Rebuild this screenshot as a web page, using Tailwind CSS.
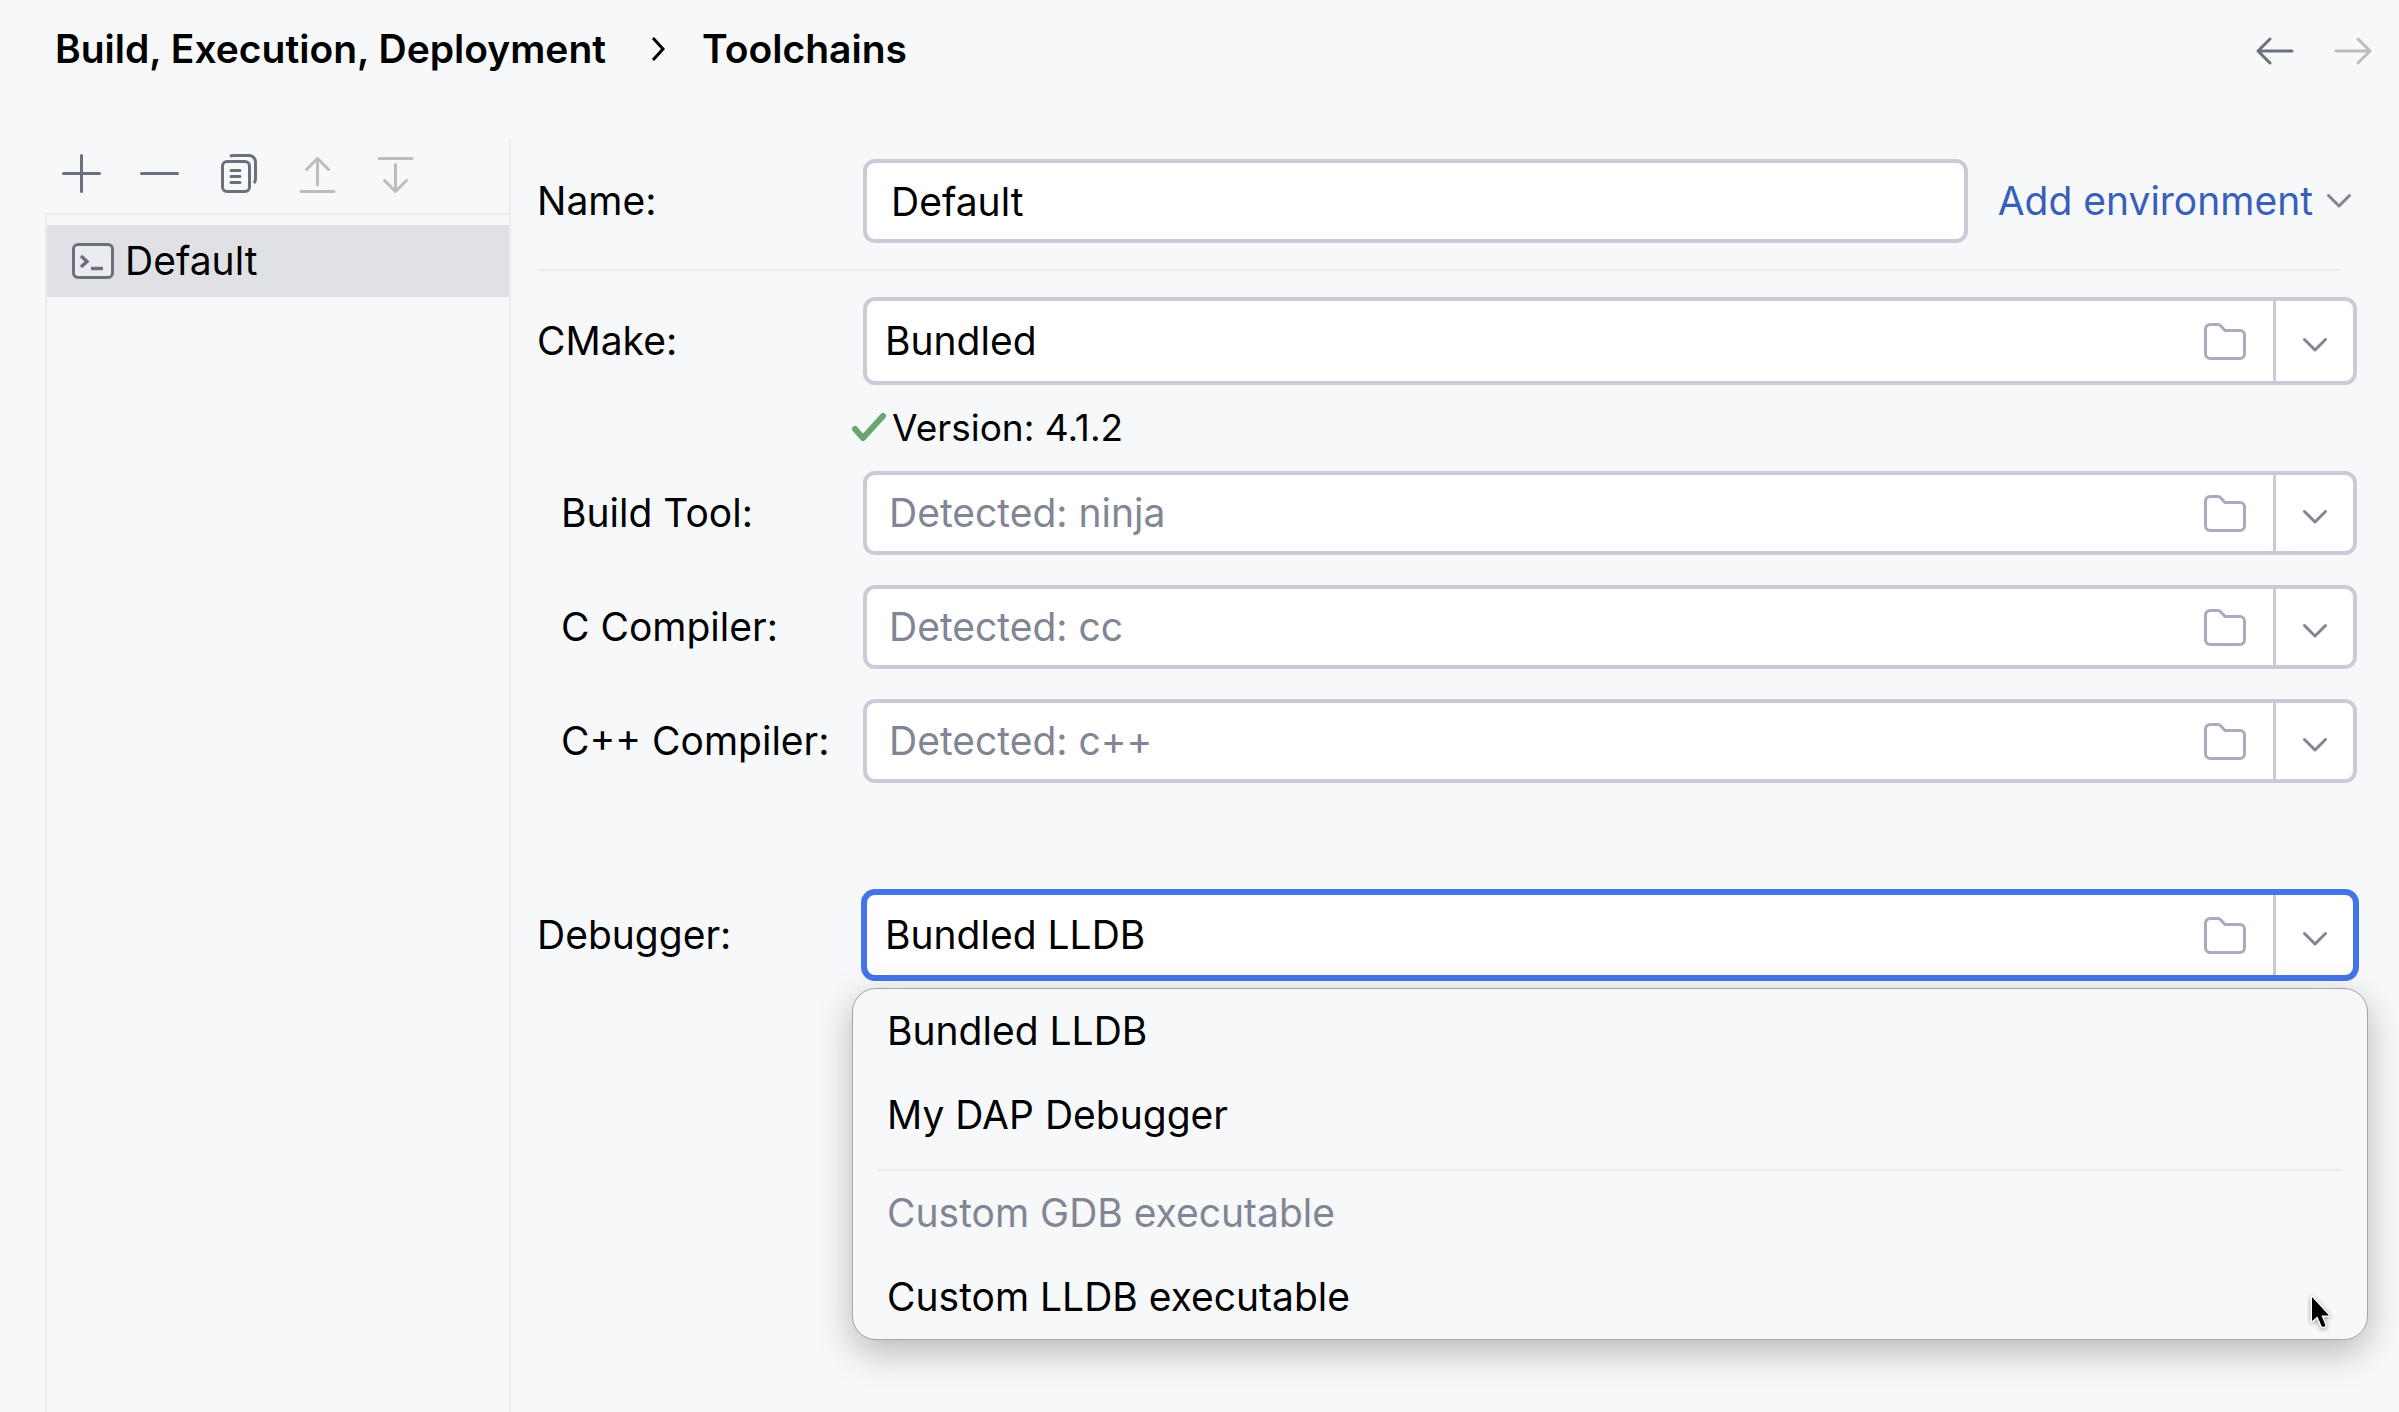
<!DOCTYPE html>
<html lang="en">
<head>
  <meta charset="UTF-8">
  <meta name="viewport" content="width=device-width, initial-scale=1.0">
  <title>Toolchains</title>
  <script src="https://cdn.jsdelivr.net/npm/@tailwindcss/browser@4"></script>
</head>
<body class="bg-[#f7f8fa] text-black font-['Inter',sans-serif] text-[39px] leading-[48px] min-h-screen flex flex-col">
  <!-- shared icons -->
  <svg class="hidden">
    <symbol id="folder" viewBox="0 0 48 48">
      <path d="M4.500 12a4.500 4.500 0 0 1 4.500-4.500h8.200a3 3 0 0 1 2.200 1l4.600 5h15a4.500 4.500 0 0 1 4.500 4.500v19a4.500 4.500 0 0 1-4.500 4.500H9a4.500 4.500 0 0 1-4.500-4.500z" fill="none" stroke="#a8adbd" stroke-width="3"/>
    </symbol>
    <symbol id="chevron" viewBox="0 0 24 24">
      <path d="M1.500 6.500 12 17 22.500 6.500" fill="none" stroke="#818594" stroke-width="3" stroke-linecap="round" stroke-linejoin="round"/>
    </symbol>
  </svg>

  <header class="h-[98px] mb-[41px] pl-[55px] pr-[22px] flex items-center justify-between shrink-0">
    <h1 class="flex items-center font-semibold">
      <span>Build, Execution, Deployment</span>
      <svg class="w-6 h-6 ml-10 mr-8" viewBox="0 0 24 24"><path d="M7 1l10 11L7 23" fill="none" stroke="#000" stroke-width="3"/></svg>
      <span>Toolchains</span>
    </h1>
    <nav class="flex gap-[30px]">
      <button aria-label="Back"><svg class="w-12 h-12" viewBox="0 0 48 48"><path d="M41 26H7M19 14 7 26l12 12" fill="none" stroke="#6c707e" stroke-width="3" stroke-linecap="round" stroke-linejoin="round"/></svg></button>
      <button aria-label="Forward" disabled><svg class="w-12 h-12" viewBox="0 0 48 48"><path d="M7 26h34M29 14l12 12-12 12" fill="none" stroke="#bdbdbd" stroke-width="3" stroke-linecap="round" stroke-linejoin="round"/></svg></button>
    </nav>
  </header>

  <div class="flex grow">
    <aside class="w-[511px] shrink-0 pl-[45px] border-r-2 border-[#ebecf0] flex flex-col">
      <div class="h-[74px] pt-[10px] pl-3 flex gap-[30px] items-start">
        <button aria-label="Add"><svg class="w-12 h-12" viewBox="0 0 48 48"><path d="M24.500 6.500v36M6.500 24.500h36" fill="none" stroke="#6c707e" stroke-width="3" stroke-linecap="round"/></svg></button>
        <button aria-label="Remove"><svg class="w-12 h-12" viewBox="0 0 48 48"><path d="M6.500 24.500h36" fill="none" stroke="#6c707e" stroke-width="3" stroke-linecap="round"/></svg></button>
        <button aria-label="Copy">
          <svg class="w-12 h-12" viewBox="0 0 48 48" fill="none" stroke="#6c707e" stroke-width="3">
            <rect x="9.500" y="12.500" width="27" height="30" rx="4.500"/>
            <path d="M18 21.500h9M18 27.500h9M18 33.500h9" stroke-linecap="round"/>
            <path d="M17 7.500a6 6 0 0 1 3-1h16a6.500 6.500 0 0 1 6.500 6.500v17a7 7 0 0 1-1.500 4"/>
          </svg>
        </button>
        <button aria-label="Move up" disabled><svg class="w-12 h-12" viewBox="0 0 48 48"><path d="M10 42.500h33M26.500 36V10M15.500 20.500l11-11 11 11" fill="none" stroke="#bdbdbd" stroke-width="3" stroke-linecap="round" stroke-linejoin="round"/></svg></button>
        <button aria-label="Move down" disabled><svg class="w-12 h-12" viewBox="0 0 48 48"><path d="M10 9.500h33M26.500 15.500v27M15.500 31.500l11 11 11-11" fill="none" stroke="#bdbdbd" stroke-width="3" stroke-linecap="round" stroke-linejoin="round"/></svg></button>
      </div>
      <ul class="grow border-t-2 border-l-2 border-[#ebecf0] pt-[10px]">
        <li class="h-[72px] bg-[#dfe1e5] pl-[22px] flex items-center gap-2">
          <svg class="w-12 h-12" viewBox="0 0 48 48">
            <rect x="4.500" y="7.500" width="39" height="33" rx="4.500" fill="#ebecf0" stroke="#6c707e" stroke-width="3"/>
            <path d="M12 19l6 5.500-6 5.500M22 31.500h12" fill="none" stroke="#6c707e" stroke-width="3.500"/>
          </svg>
          <span>Default</span>
        </li>
      </ul>
    </aside>

    <main class="grow pl-[26px] pr-[42px] pt-5">
      <div class="flex items-center">
        <label for="name" class="w-[326px] shrink-0">Name:</label>
        <input id="name" type="text" value="Default" class="grow min-w-0 h-[84px] border-4 border-[#c9ccd6] rounded-xl bg-white pl-6 outline-none">
        <button class="ml-[30px] mr-[6px] flex items-center gap-[14px] text-[#385fb9]">
          <span>Add environment</span>
          <svg class="w-6 h-6"><use href="#chevron"/></svg>
        </button>
      </div>
      <hr class="my-[26px] mr-4 border-t-2 border-[#ebecf0]">

      <div class="flex items-center">
        <label for="cmake" class="w-[326px] shrink-0">CMake:</label>
        <div class="grow h-[88px] flex border-4 border-[#c9ccd6] rounded-xl bg-white">
          <input id="cmake" type="text" value="Bundled" class="grow min-w-0 pl-[18px] outline-none">
          <button class="px-6" aria-label="Browse"><svg class="w-12 h-12"><use href="#folder"/></svg></button>
          <button class="w-20 border-l-[3px] border-[#c9ccd6] flex items-center justify-center pt-2" aria-label="Show options"><svg class="w-6 h-6"><use href="#chevron"/></svg></button>
        </div>
      </div>
      <div class="h-[86px] pl-[315px] flex items-center gap-1 text-[37px]">
        <svg class="w-9 h-9" viewBox="0 0 36 36"><path d="M3 19l8 9L31 6" fill="none" stroke="#6aa56f" stroke-width="6" stroke-linecap="round" stroke-linejoin="round"/></svg>
        <span>Version: 4.1.2</span>
      </div>

      <div class="flex flex-col gap-[30px]">
        <div class="flex items-center">
          <label for="build-tool" class="w-[326px] shrink-0 pl-6">Build Tool:</label>
          <div class="grow h-[84px] flex border-4 border-[#c9ccd6] rounded-xl bg-white">
            <input id="build-tool" type="text" placeholder="Detected: ninja" class="grow min-w-0 pl-[22px] outline-none placeholder:text-[#818594]">
            <button class="px-6" aria-label="Browse"><svg class="w-12 h-12"><use href="#folder"/></svg></button>
            <button class="w-20 border-l-[3px] border-[#c9ccd6] flex items-center justify-center pt-2" aria-label="Show options"><svg class="w-6 h-6"><use href="#chevron"/></svg></button>
          </div>
        </div>
        <div class="flex items-center">
          <label for="c-compiler" class="w-[326px] shrink-0 pl-6">C Compiler:</label>
          <div class="grow h-[84px] flex border-4 border-[#c9ccd6] rounded-xl bg-white">
            <input id="c-compiler" type="text" placeholder="Detected: cc" class="grow min-w-0 pl-[22px] outline-none placeholder:text-[#818594]">
            <button class="px-6" aria-label="Browse"><svg class="w-12 h-12"><use href="#folder"/></svg></button>
            <button class="w-20 border-l-[3px] border-[#c9ccd6] flex items-center justify-center pt-2" aria-label="Show options"><svg class="w-6 h-6"><use href="#chevron"/></svg></button>
          </div>
        </div>
        <div class="flex items-center">
          <label for="cpp-compiler" class="w-[326px] shrink-0 pl-6">C++ Compiler:</label>
          <div class="grow h-[84px] flex border-4 border-[#c9ccd6] rounded-xl bg-white">
            <input id="cpp-compiler" type="text" placeholder="Detected: c++" class="grow min-w-0 pl-[22px] outline-none placeholder:text-[#818594]">
            <button class="px-6" aria-label="Browse"><svg class="w-12 h-12"><use href="#folder"/></svg></button>
            <button class="w-20 border-l-[3px] border-[#c9ccd6] flex items-center justify-center pt-2" aria-label="Show options"><svg class="w-6 h-6"><use href="#chevron"/></svg></button>
          </div>
        </div>
      </div>

      <div class="mt-[108px] flex items-center">
        <label for="debugger" class="w-[326px] shrink-0">Debugger:</label>
        <div class="grow relative">
          <div class="h-[88px] flex border-4 border-[#4573e8] ring-2 ring-[#4573e8] rounded-xl bg-white">
            <input id="debugger" type="text" value="Bundled LLDB" role="combobox" aria-expanded="true" aria-controls="debugger-list" class="grow min-w-0 pl-[18px] outline-none">
            <button class="px-6" aria-label="Browse"><svg class="w-12 h-12"><use href="#folder"/></svg></button>
            <button class="w-20 border-l-[3px] border-[#c9ccd6] flex items-center justify-center pt-2" aria-label="Show options"><svg class="w-6 h-6"><use href="#chevron"/></svg></button>
          </div>
          <!-- open drop-down -->
          <div class="absolute top-[97px] left-[-11px] right-[-11px] border border-[#a3a4a7] rounded-3xl bg-[#f7f8fa] shadow-[0_12px_36px_rgba(0,0,0,0.26)]">
            <ul id="debugger-list" role="listbox" aria-label="Debugger">
              <li role="option" aria-selected="true" class="h-[84px] pl-[34px] flex items-center">Bundled LLDB</li>
              <li role="option" class="h-[84px] pl-[34px] flex items-center">My DAP Debugger</li>
              <li role="separator" class="h-[14px] mx-6 border-b-2 border-[#ebecf0]"></li>
              <li role="option" aria-disabled="true" class="h-[84px] pl-[34px] flex items-center text-[#818594]">Custom GDB executable</li>
              <li role="option" class="h-[84px] pl-[34px] flex items-center">Custom LLDB executable</li>
            </ul>
            <svg class="absolute right-[34px] bottom-2 w-6 h-9 drop-shadow-[0_1px_2px_rgba(0,0,0,0.4)]" viewBox="0 0 24 36">
              <path d="M3 2v24l5.500-4.500 4 9.500q2 2 4-.500l-4-10h7.500z" fill="#000" stroke="#fff" stroke-width="3" stroke-linejoin="round" paint-order="stroke"/>
            </svg>
          </div>
        </div>
      </div>
    </main>
  </div>
</body>
</html>
